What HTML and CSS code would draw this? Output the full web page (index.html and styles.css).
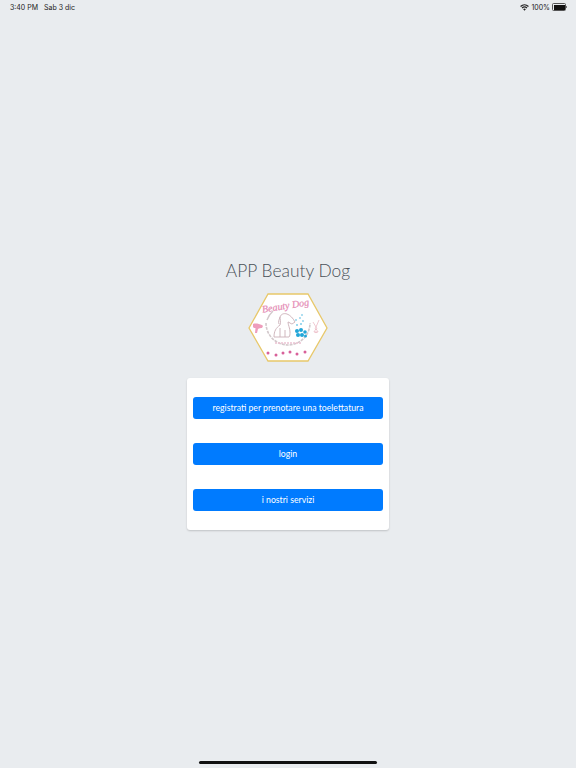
FILE: index.html
```html
<!DOCTYPE html>
<html lang="it">
<head>
    <meta charset="UTF-8">
    <meta name="viewport" content="width=device-width, initial-scale=1.0">
    <title>APP Beauty Dog</title>
    <link rel="stylesheet" href="styles.css">
</head>
<body>
    <div class="status-bar">
        <div class="status-left"><span>3:40 PM</span><span>Sab 3 dic</span></div>
        <div class="status-right">
            <svg class="wifi" width="9" height="7" viewBox="0 0 10 8"><path d="M5 7.6 3.5 5.9a2.2 2.2 0 0 1 3 0zM2.7 5.1 1.7 4a4.9 4.9 0 0 1 6.6 0l-1 1.1a3.4 3.4 0 0 0-4.6 0zM1 3.3 0 2.2a7.4 7.4 0 0 1 10 0L9 3.3a6 6 0 0 0-8 0z" fill="#222"/></svg>
            <span>100%</span>
            <div class="battery"></div>
        </div>
    </div>

    <div class="main">
        <h1>APP Beauty Dog</h1>
        <svg class="logo" width="82" height="72" viewBox="0 0 82 72">
            <polygon points="21,2 61,2 80,36 61,69 21,69 2,36" fill="#fff" stroke="#e8c86a" stroke-width="1.3"/>
            <text x="39" y="17" text-anchor="middle" transform="rotate(-9 39 17)" class="logo-text">Beauty Dog</text>
            <path d="M19 31a22 22 0 0 0 44 0" fill="none" stroke="#d3c9cc" stroke-width="1.6" stroke-dasharray="3 1"/>
            <path d="M20 28a22 22 0 0 1 6-9" fill="none" stroke="#d3c9cc" stroke-width="1.4"/>
            <path d="M27 45c0-6 2-9 6-12 1-3 0-6 0-8 1-3 4-4 7-3 3 1 6 4 8 8l-3 2c-1 0-3-2-4-2 0 3 2 6 2 10 0 2 0 4-1 5zM33 36v9M38 38v7M33 25c-1 3-2 5-1 7" fill="none" stroke="#cbb0b8" stroke-width=".9"/>
            <g fill="#22a6d8">
                <circle cx="50" cy="39" r="2"/><circle cx="54" cy="38" r="2"/><circle cx="58" cy="40" r="1.8"/><circle cx="51" cy="43" r="2"/><circle cx="55" cy="43" r="2"/><circle cx="58.500" cy="44" r="1.500"/>
                <circle cx="50" cy="33" r=".8"/><circle cx="54" cy="32" r=".8"/><circle cx="49" cy="28" r=".7"/><circle cx="53" cy="26" r=".7"/><circle cx="55" cy="23" r=".7"/><circle cx="56" cy="29" r=".7"/>
            </g>
            <path d="M6 32c3-1 6 0 9 1l1 1-1 2c-1 0-3 0-4 1l-1 4H8l.500-5c-1 0-2 0-2.500-1z" fill="#ee9dbc"/>
            <path d="M72 28l-3 7-1 2M66 30l3 5 1 2M67 39a1.600 1.600 0 1 0 1-1.500M70 37.500a1.600 1.600 0 1 0 1 1.500" fill="none" stroke="#ecbcc6" stroke-width=".8"/>
            <path d="M28 51h26" stroke="#ecc2d2" stroke-width="1.300" stroke-dasharray="2 1" fill="none"/>
            <g fill="#d8609a">
                <circle cx="21" cy="61" r="1.500"/><circle cx="29" cy="63" r="1.500"/><circle cx="36" cy="61" r="1.500"/><circle cx="43" cy="60" r="1.500"/><circle cx="50" cy="62" r="1.500"/><circle cx="58" cy="60" r="1.500"/>
            </g>
        </svg>
        <div class="card">
            <a class="btn" href="#">registrati per prenotare una toelettatura</a>
            <a class="btn" href="#">login</a>
            <a class="btn" href="#">i nostri servizi</a>
        </div>
    </div>

    <div class="home-indicator"></div>
</body>
</html>
```

FILE: styles.css
```css
html, body { margin: 0; height: 100%; }
body { background: #e9ecef; font-family: Lato, "Open Sans", sans-serif; color: #212529; height: 768px; overflow: hidden; position: relative; }

.status-bar { display: flex; justify-content: space-between; align-items: center; height: 14px; padding: 0 9px 0 10px; font-family: Inter, "Liberation Sans", sans-serif; font-size: 7px; color: #222; }
.status-left { display: flex; gap: 6px; }
.status-right { display: flex; align-items: center; gap: 2px; }
.battery { position: relative; width: 11px; height: 5px; border: 0.5px solid #555; border-radius: 1.5px; background: #111; background-clip: content-box; padding: 0.5px; margin-right: 1px; }
.battery::after { content: ""; position: absolute; right: -2px; top: 1.5px; width: 1px; height: 2px; background: #777; }

.main { display: flex; flex-direction: column; align-items: center; padding-top: 247px; }
h1 { margin: 0 0 11px; font-weight: 300; font-size: 17.4px; line-height: 20px; color: #495057; }
.logo { display: block; }
.logo-text { font-family: "Liberation Serif", serif; font-style: italic; font-size: 10px; fill: #e58ab4; stroke: #e58ab4; stroke-width: 0.2; }

.card { width: 190px; margin-top: 14px; padding: 19px 6px; background: #fff; border-radius: 3px; box-shadow: 0 1px 2px rgba(0,0,0,0.18); display: flex; flex-direction: column; gap: 24px; }
.btn { display: block; height: 22px; line-height: 22px; background: #007bff; border-radius: 3px; color: #fff; text-align: center; text-decoration: none; font-size: 8.7px; }

.home-indicator { position: absolute; left: 199px; bottom: 4px; width: 178px; height: 3px; border-radius: 2px; background: #111; }
```
